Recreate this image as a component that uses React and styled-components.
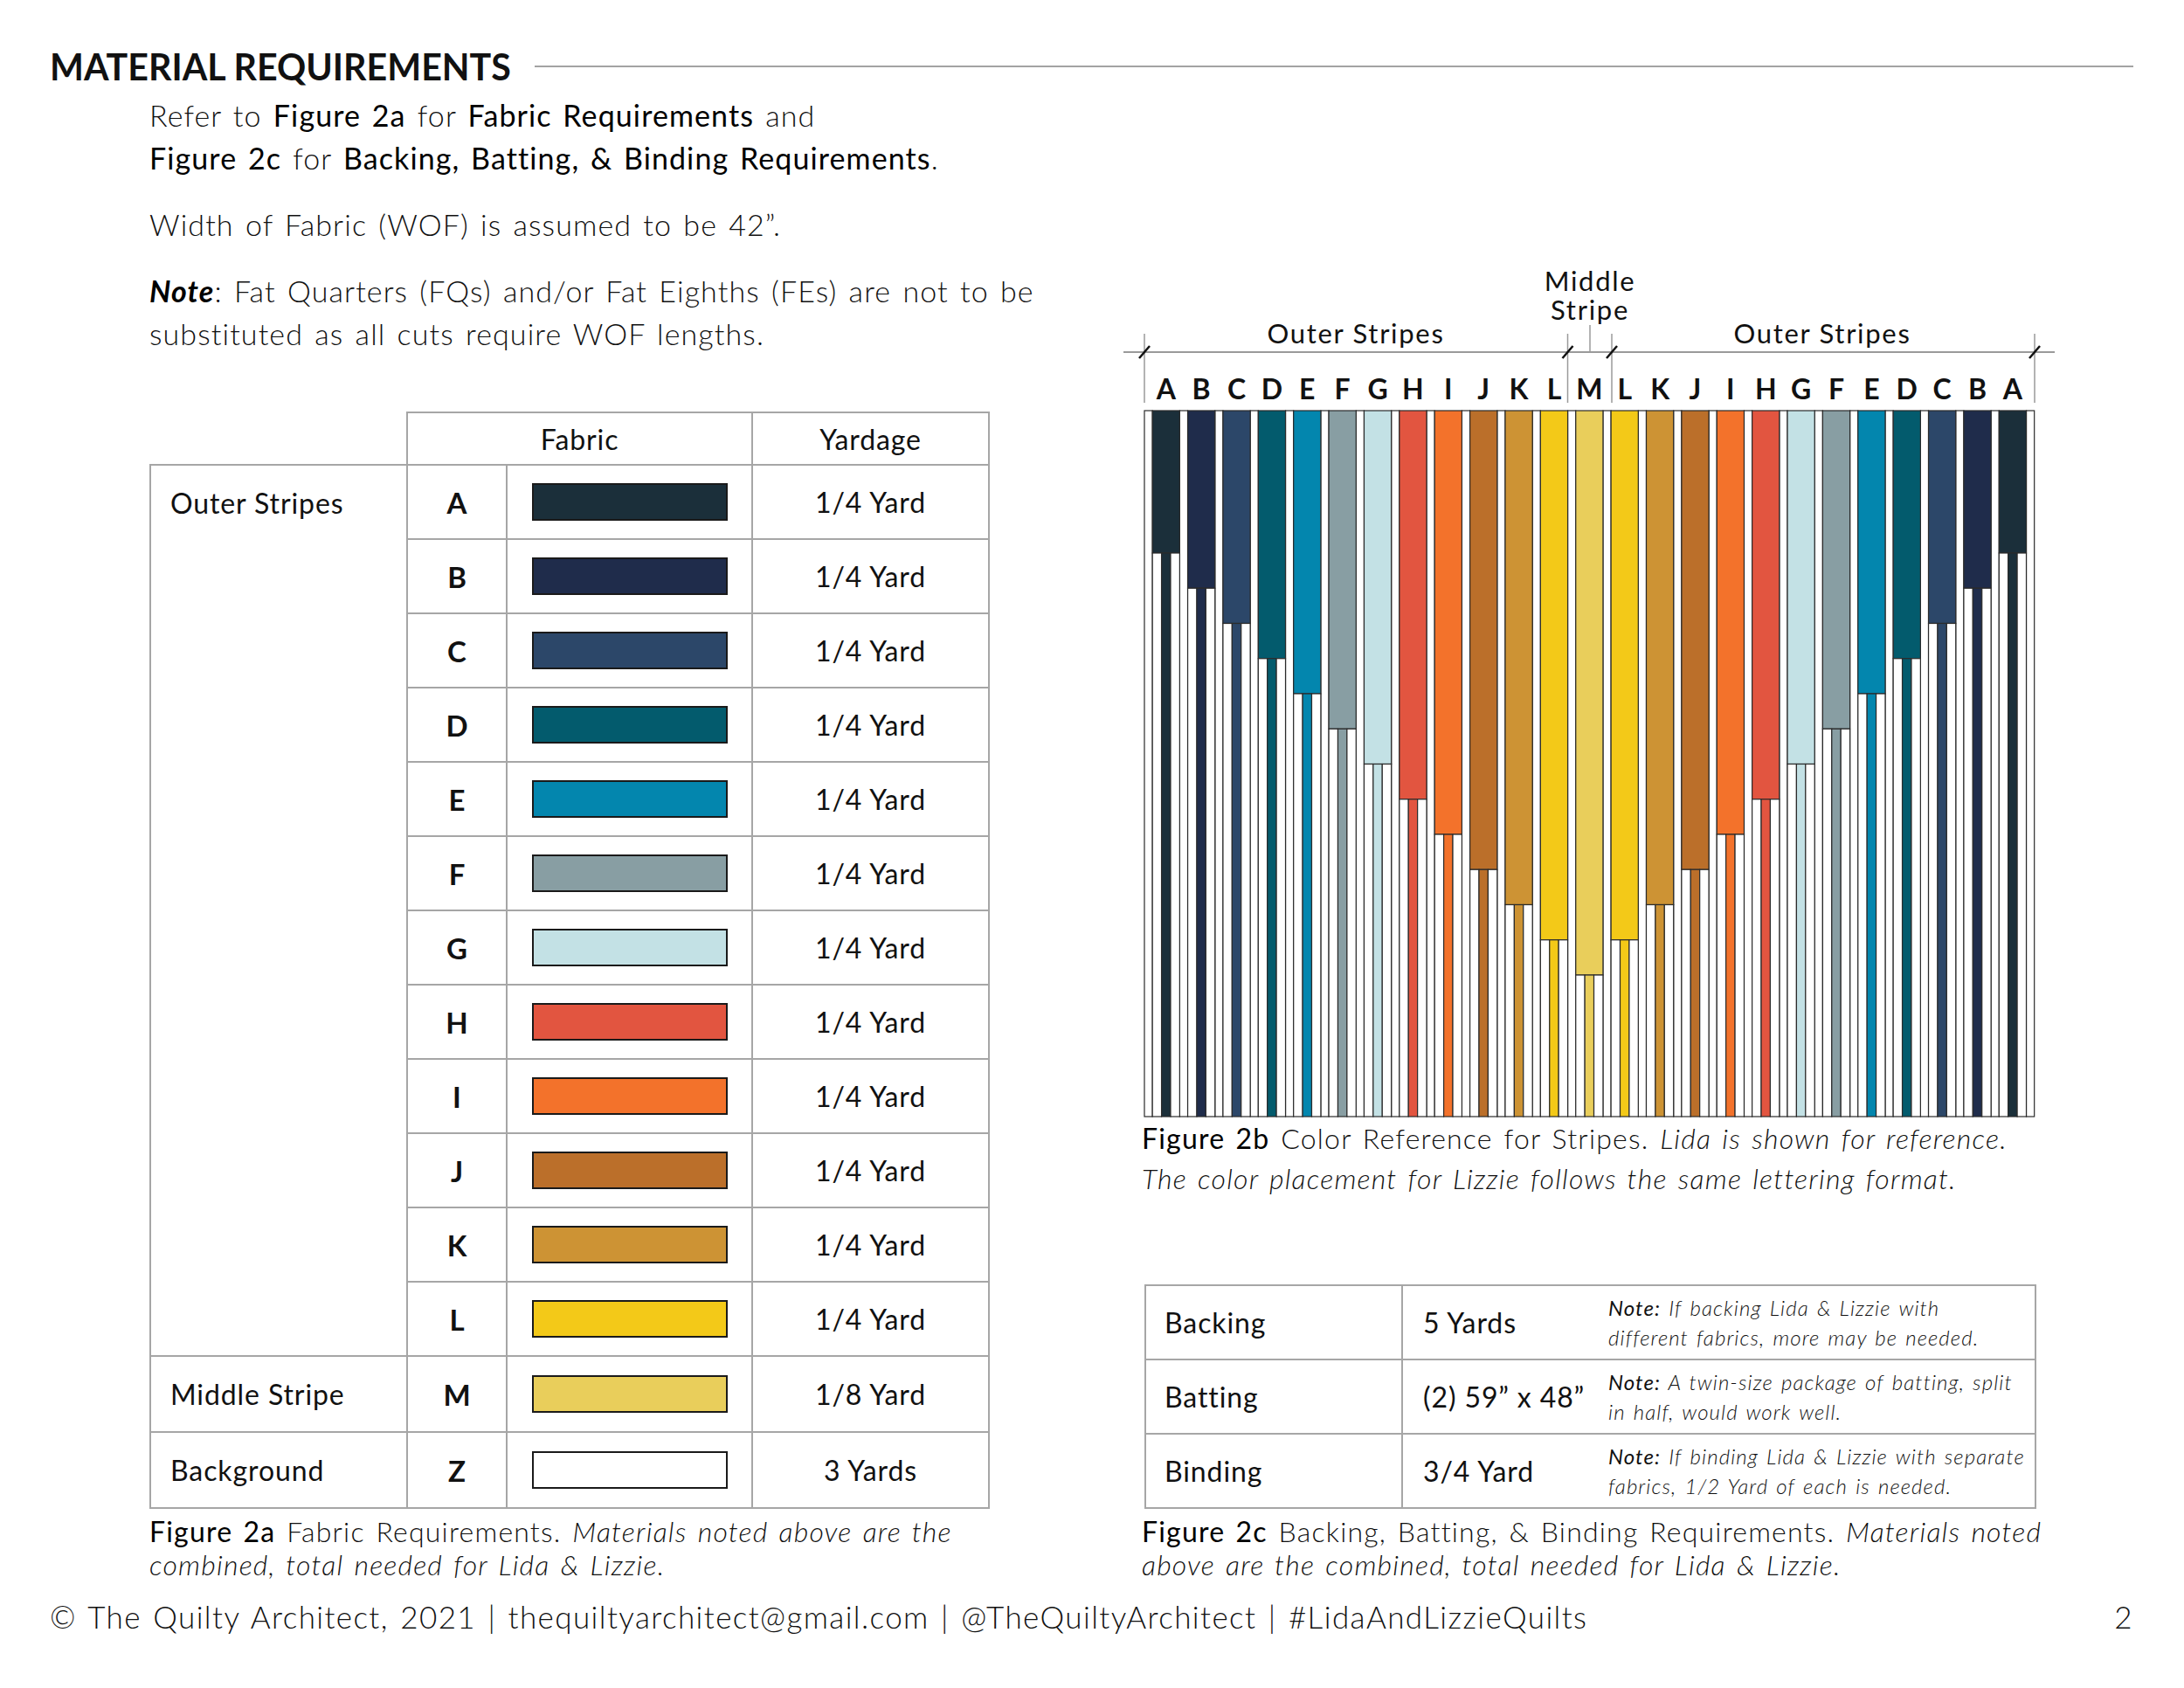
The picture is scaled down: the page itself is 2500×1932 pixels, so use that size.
import React from 'react';
import styled, { createGlobalStyle } from 'styled-components';

const GlobalStyle = createGlobalStyle`
  html, body {
    margin: 0;
    padding: 0;
    background: #ffffff;
  }

  body {
    font-family: Lato, 'Open Sans', sans-serif;
    color: #111111;
  }
`;

const FABRICS = {
  A: '#1b2f3a',
  B: '#1f2c4b',
  C: '#2c4769',
  D: '#035b6d',
  E: '#0386ae',
  F: '#889ea3',
  G: '#c3e1e5',
  H: '#e25540',
  I: '#f3722b',
  J: '#bb6f2a',
  K: '#cd9334',
  L: '#f3c918',
  M: '#e9ce5b',
  Z: '#ffffff',
};

const OUTER = ['A', 'B', 'C', 'D', 'E', 'F', 'G', 'H', 'I', 'J', 'K', 'L'];
const STRIPES = [...OUTER, 'M', ...[...OUTER].reverse()];

const Page = styled.div`
  width: 2500px;
  min-height: 1932px;
  box-sizing: border-box;
  padding-top: 56px;
`;

const Header = styled.header`
  display: flex;
  align-items: center;
  height: 40px;
  padding: 0 58px 0 57px;
`;

const Title = styled.h1`
  margin: 0;
  font-size: 41.2px;
  line-height: 40px;
  font-weight: 700;
  color: #111;
  white-space: nowrap;
`;

const Rule = styled.div`
  flex: 1;
  height: 2px;
  margin-left: 27px;
  background: #a3a3a3;
`;

const Main = styled.main`
  display: grid;
  grid-template-columns: 1109px 1080px;
  align-items: start;
  padding-left: 171px;
`;

const Column = styled.div`
  display: flex;
  flex-direction: column;
  align-items: flex-start;
`;

const Intro = styled.div`
  padding-top: 11px;
  font-size: 34px;
  line-height: 49px;
  font-weight: 300;
  letter-spacing: 1.1px;
  word-spacing: 2.9px;
  white-space: nowrap;
`;

const Para = styled.p`
  margin: 0;

  & + & {
    margin-top: 27px;
  }

  b {
    font-weight: 400;
    color: #000;
  }

  strong {
    font-weight: 700;
    font-style: italic;
    color: #000;
  }
`;

const Table = styled.table`
  border-collapse: collapse;
  table-layout: fixed;
  margin-top: ${(p) => p.$top}px;
  margin-left: ${(p) => p.$left || 0}px;
  font-size: 32px;
  font-weight: 400;
  letter-spacing: 0.9px;
  color: #111;

  td,
  th {
    border: 2px solid #a6a6a6;
    padding: 0;
    font-weight: 400;
  }
`;

const BlankHead = styled.th`
  && {
    border-top: none;
    border-left: none;
  }
`;

const HeadCell = styled.th`
  height: 58px;
  text-align: center;
  vertical-align: middle;
`;

const Row = styled.tr`
  height: 85px;
`;

const GroupCell = styled.td`
  vertical-align: top;
  text-align: left;
  padding-left: 22px !important;
  line-height: 85px;
`;

const LetterCell = styled.td`
  text-align: center;
  vertical-align: middle;
  font-size: 33px;
  letter-spacing: 0;

  && {
    font-weight: 700;
  }
`;

const SwatchCell = styled.td`
  vertical-align: middle;
`;

const Swatch = styled.div`
  width: 224px;
  height: 43px;
  margin: 0 auto;
  box-sizing: border-box;
  border: 2px solid #1a1a1a;
  background: ${(p) => p.$color};
`;

const YardCell = styled.td`
  text-align: center;
  vertical-align: middle;
`;

const Caption = styled.p`
  margin: ${(p) => p.$top}px 0 0 ${(p) => p.$left || 0}px;
  font-size: 32px;
  line-height: ${(p) => p.$lh}px;
  font-weight: 300;
  letter-spacing: 1.2px;
  word-spacing: 2.9px;
  color: #111;
  white-space: nowrap;

  b {
    font-weight: 400;
    color: #000;
  }

  i {
    font-style: italic;
  }
`;

const LabelCell = styled.td`
  height: 83px;
  vertical-align: middle;
  padding-left: ${(p) => p.$pad}px !important;
  white-space: nowrap;

  && {
    border-right: ${(p) => (p.$divider ? '2px solid #a6a6a6' : 'none')};
  }
`;

const NoteCell = styled.td`
  vertical-align: middle;
  padding-left: 10px !important;
  font-size: 24px;
  line-height: 34px;
  font-style: italic;
  letter-spacing: 1.1px;
  word-spacing: 2px;
  white-space: nowrap;

  && {
    font-weight: 300;
    border-left: none;
  }

  b {
    font-weight: 400;
  }
`;

const StripeSvg = styled.svg`
  display: block;
  margin-top: 194px;
`;

const Label = styled.text`
  font-family: Lato, 'Open Sans', sans-serif;
  font-size: 31px;
  font-weight: 400;
  letter-spacing: 1.7px;
  fill: #111;
`;

const Letter = styled.text`
  font-family: Lato, 'Open Sans', sans-serif;
  font-size: 32px;
  font-weight: 700;
  fill: #111;
`;

const Footer = styled.footer`
  display: flex;
  justify-content: space-between;
  margin-top: 20px;
  padding: 0 58px 0 57px;
  font-size: 35px;
  line-height: 40px;
  font-weight: 300;
  letter-spacing: 1.4px;
  word-spacing: 2.5px;
  color: #111;
  white-space: nowrap;
`;

const X0 = 1310;
const GAP = 9.18;
const COL = 31.2;
const TOP = 470;
const BOTTOM = 1278;
const PITCH = GAP + COL;

// each stripe's solid block ends one step lower towards the middle
const stepY = (i) => 1116 - Math.abs(i - 12) * 40.25;

const StripeDiagram = () => {
  const outline = { stroke: '#2b2b2b', strokeWidth: 1.2 };
  const ticks = [1310, 1794.5, 1845, 2329];

  return (
    <StripeSvg width="1080" height="990" viewBox="1280 290 1080 990">
      <Label x="1820" y="333" textAnchor="middle">Middle</Label>
      <Label x="1820" y="366" textAnchor="middle">Stripe</Label>
      <Label x="1552" y="393" textAnchor="middle">Outer Stripes</Label>
      <Label x="2086" y="393" textAnchor="middle">Outer Stripes</Label>

      <line x1="1820" y1="372" x2="1820" y2="403" stroke="#9a9a9a" strokeWidth="1.5" />
      <line x1="1286" y1="403" x2="2352" y2="403" stroke="#9a9a9a" strokeWidth="2" />
      {ticks.map((x) => (
        <g key={x}>
          <line x1={x} y1="382" x2={x} y2="461" stroke="#9a9a9a" strokeWidth="1.5" />
          <line x1={x - 6} y1="410" x2={x + 6} y2="396" stroke="#111" strokeWidth="2.5" />
        </g>
      ))}

      {STRIPES.map((k, i) => (
        <Letter key={`l${i}`} x={X0 + GAP + i * PITCH + COL / 2} y="457" textAnchor="middle">
          {k}
        </Letter>
      ))}

      {Array.from({ length: 26 }).map((_, j) => (
        <rect
          key={`g${j}`}
          x={X0 + j * PITCH}
          y={TOP}
          width={GAP}
          height={BOTTOM - TOP}
          fill="#fff"
          {...outline}
        />
      ))}

      {STRIPES.map((k, i) => {
        const x = X0 + GAP + i * PITCH;
        const y = stepY(i);
        const t = COL / 3;
        const c = FABRICS[k];
        return (
          <g key={`s${i}`}>
            <rect x={x} y={TOP} width={COL} height={y - TOP} fill={c} {...outline} />
            <rect x={x} y={y} width={t} height={BOTTOM - y} fill="#fff" {...outline} />
            <rect x={x + t} y={y} width={t} height={BOTTOM - y} fill={c} {...outline} />
            <rect x={x + 2 * t} y={y} width={t} height={BOTTOM - y} fill="#fff" {...outline} />
          </g>
        );
      })}
    </StripeSvg>
  );
};

const NOTES = [
  {
    label: 'Backing',
    value: '5 Yards',
    lines: [' If backing Lida & Lizzie with', 'different fabrics, more may be needed.'],
  },
  {
    label: 'Batting',
    value: '(2) 59\u201D x 48\u201D',
    lines: [' A twin-size package of batting, split', 'in half, would work well.'],
  },
  {
    label: 'Binding',
    value: '3/4 Yard',
    lines: [' If binding Lida & Lizzie with separate', 'fabrics, 1/2 Yard of each is needed.'],
  },
];

const rows = [
  ...OUTER.map((k) => ({ k, yard: '1/4 Yard' })),
  { k: 'M', yard: '1/8 Yard', group: 'Middle Stripe' },
  { k: 'Z', yard: '3 Yards', group: 'Background' },
];

const App = () => {
  return (
    <Page>
      <GlobalStyle />
      <Header>
        <Title>MATERIAL REQUIREMENTS</Title>
        <Rule />
      </Header>

      <Main>
        <Column>
          <Intro>
            <Para>
              Refer to <b>Figure 2a</b> for <b>Fabric Requirements</b> and
              <br />
              <b>Figure 2c</b> for <b>Backing, Batting, &amp; Binding Requirements</b>.
            </Para>
            <Para>Width of Fabric (WOF) is assumed to be 42”.</Para>
            <Para>
              <strong>Note</strong>: Fat Quarters (FQs) and/or Fat Eighths (FEs) are not to be
              <br />
              substituted as all cuts require WOF lengths.
            </Para>
          </Intro>

          <Table $top={65}>
            <colgroup>
              <col style={{ width: 294 }} />
              <col style={{ width: 114 }} />
              <col style={{ width: 281 }} />
              <col style={{ width: 271 }} />
            </colgroup>
            <thead>
              <tr>
                <BlankHead />
                <HeadCell colSpan={2}>Fabric</HeadCell>
                <HeadCell>Yardage</HeadCell>
              </tr>
            </thead>
            <tbody>
              {rows.map((r, i) => (
                <Row key={r.k}>
                  {i === 0 && <GroupCell rowSpan={12}>Outer Stripes</GroupCell>}
                  {r.group && <GroupCell>{r.group}</GroupCell>}
                  <LetterCell>{r.k}</LetterCell>
                  <SwatchCell>
                    <Swatch $color={FABRICS[r.k]} />
                  </SwatchCell>
                  <YardCell>{r.yard}</YardCell>
                </Row>
              ))}
            </tbody>
          </Table>

          <Caption $top={7} $lh={38}>
            <b>Figure 2a</b> Fabric Requirements. <i>Materials noted above are the</i>
            <br />
            <i>combined, total needed for Lida &amp; Lizzie.</i>
          </Caption>
        </Column>

        <Column>
          <StripeDiagram />

          <Caption $top={0} $left={27} $lh={46}>
            <b>Figure 2b</b> Color Reference for Stripes. <i>Lida is shown for reference.</i>
            <br />
            <i>The color placement for Lizzie follows the same lettering format.</i>
          </Caption>

          <Table $top={98} $left={30}>
            <colgroup>
              <col style={{ width: 294 }} />
              <col style={{ width: 226 }} />
              <col style={{ width: 499 }} />
            </colgroup>
            <tbody>
              {NOTES.map((n) => (
                <tr key={n.label}>
                  <LabelCell $pad={21} $divider>{n.label}</LabelCell>
                  <LabelCell $pad={23}>{n.value}</LabelCell>
                  <NoteCell>
                    <b>Note:</b>
                    {n.lines[0]}
                    <br />
                    {n.lines[1]}
                  </NoteCell>
                </tr>
              ))}
            </tbody>
          </Table>

          <Caption $top={7} $left={27} $lh={38}>
            <b>Figure 2c</b> Backing, Batting, &amp; Binding Requirements. <i>Materials noted</i>
            <br />
            <i>above are the combined, total needed for Lida &amp; Lizzie.</i>
          </Caption>
        </Column>
      </Main>

      <Footer>
        <span>© The Quilty Architect, 2021 | thequiltyarchitect@gmail.com | @TheQuiltyArchitect | #LidaAndLizzieQuilts</span>
        <span>2</span>
      </Footer>
    </Page>
  );
};

export default App;
